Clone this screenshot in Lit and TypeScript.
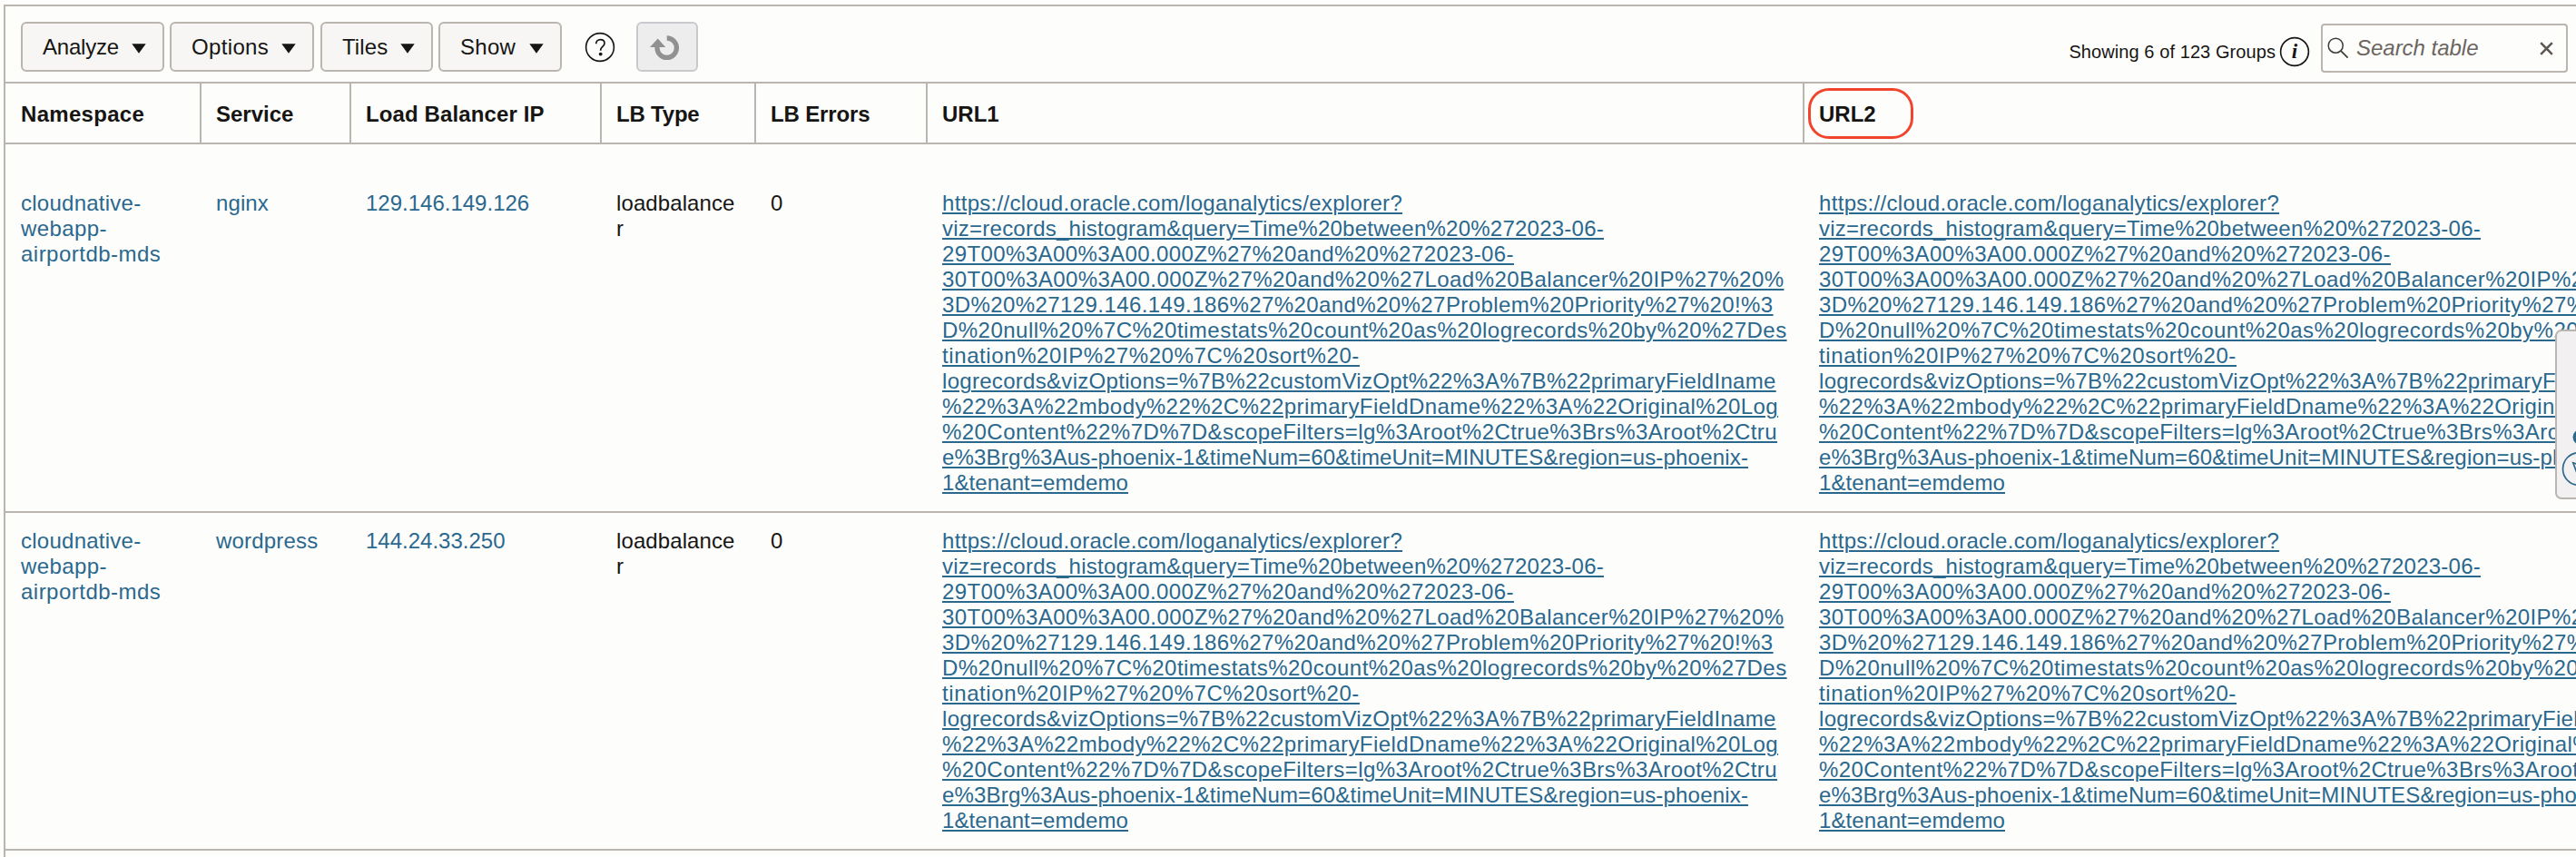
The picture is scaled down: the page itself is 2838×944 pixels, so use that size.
import { LitElement, html, css, svg } from 'lit';
import { customElement, property } from 'lit/decorators.js';
import { styleMap } from 'lit/directives/style-map.js';

type Line = [text: string, tracking: number];

interface Row {
  namespace: Line[];
  service: Line;
  ip: Line;
  type: Line[];
  errors: string;
}

const URL_LINES: Line[] = [
  ['https://cloud.oracle.com/loganalytics/explorer?', 0.315],
  ['viz=records_histogram&query=Time%20between%20%272023-06-', 0.241],
  ['29T00%3A00%3A00.000Z%27%20and%20%272023-06-', 0.407],
  ['30T00%3A00%3A00.000Z%27%20and%20%27Load%20Balancer%20IP%27%20%', 0.432],
  ['3D%20%27129.146.149.186%27%20and%20%27Problem%20Priority%27%20!%3', 0.415],
  ['D%20null%20%7C%20timestats%20count%20as%20logrecords%20by%20%27Des', 0.476],
  ['tination%20IP%27%20%7C%20sort%20-', 0.597],
  ['logrecords&vizOptions=%7B%22customVizOpt%22%3A%7B%22primaryFieldIname', 0.3],
  ['%22%3A%22mbody%22%2C%22primaryFieldDname%22%3A%22Original%20Log', 0.432],
  ['%20Content%22%7D%7D&scopeFilters=lg%3Aroot%2Ctrue%3Brs%3Aroot%2Ctru', 0.442],
  ['e%3Brg%3Aus-phoenix-1&timeNum=60&timeUnit=MINUTES&region=us-phoenix-', 0.181],
  ['1&tenant=emdemo', 0.1],
];

const NAMESPACE: Line[] = [['cloudnative-', 0.25], ['webapp-', 0.4], ['airportdb-mds', 0.48]];
const TYPE: Line[] = [['loadbalance', 0.1], ['r', 0]];

const ROWS: Row[] = [
  { namespace: NAMESPACE, service: ['nginx', 0.1], ip: ['129.146.149.126', 0], type: TYPE, errors: '0' },
  { namespace: NAMESPACE, service: ['wordpress', 0.2], ip: ['144.24.33.250', 0], type: TYPE, errors: '0' },
];

const HEADERS: Line[] = [
  ['Namespace', 0.3],
  ['Service', 0],
  ['Load Balancer IP', 0.12],
  ['LB Type', -0.2],
  ['LB Errors', -0.15],
  ['URL1', 0],
  ['URL2', 0],
];

const track = ([text, spacing]: Line) =>
  html`<span style=${styleMap({ letterSpacing: `${spacing}px` })}>${text}</span>`;

@customElement('menu-button')
class MenuButton extends LitElement {
  @property() label = '';
  @property({ type: Number }) width = 158;
  @property({ type: Number }) tracking = 0;

  static styles = css`
    :host { display: block; }
    .button {
      box-sizing: border-box;
      display: flex;
      align-items: center;
      justify-content: space-between;
      height: 55px;
      padding: 0 18px 0 22px;
      border: 2px solid #bbb5b0;
      border-radius: 6px;
      background: #f7f6f4;
      color: #161513;
      font: 24px/28px 'Liberation Sans', Arial, sans-serif;
      white-space: nowrap;
    }
    .arrow { display: block; margin-top: 3px; }
  `;

  render() {
    return html`<div class="button" style=${styleMap({ width: `${this.width}px` })}>
      ${track([this.label, this.tracking])}
      <svg class="arrow" width="16" height="11" viewBox="0 0 16 11"><path d="M.3 .2h15.4L8 10.8z" fill="#161513" /></svg>
    </div>`;
  }
}

@customElement('side-panel')
class SidePanel extends LitElement {
  static styles = css`
    :host { display: block; }
    .panel {
      box-sizing: border-box;
      width: 60px;
      height: 187px;
      border: 2px solid #bbb5b0;
      border-radius: 7px;
      background: #f2f0f0;
    }
    svg { display: block; }
  `;

  render() {
    return html`<div class="panel">
      <svg width="56" height="183" viewBox="2817 365 56 183">
        <circle cx="2842.5" cy="481.5" r="8" fill="#2a688e" />
        <circle cx="2841.5" cy="516.5" r="18" fill="none" stroke="#2a688e" stroke-width="1.7" />
        <path d="M2834.8 509.8L2849 514.5L2839 521z" fill="none" stroke="#2a688e" stroke-width="1.7" />
      </svg>
    </div>`;
  }
}

@customElement('app-root')
class AppRoot extends LitElement {
  static styles = css`
    :host {
      display: block;
      position: relative;
      box-sizing: border-box;
      width: 100%;
      height: 944px;
      overflow: hidden;
      padding: 5px 0 0 4px;
      background: #fdfdfc;
      color: #161513;
      font: 24px/28px 'Liberation Sans', Arial, sans-serif;
    }
    .frame {
      box-sizing: border-box;
      height: 939px;
      border-top: 2px solid #bbb5b0;
      border-left: 2px solid #bbb5b0;
      overflow: hidden;
    }
    .toolbar {
      box-sizing: border-box;
      display: flex;
      align-items: flex-start;
      justify-content: space-between;
      height: 85px;
      padding: 17px 9px 0 17px;
      border-bottom: 2px solid #bbb5b0;
    }
    .actions, .tools { display: flex; align-items: flex-start; }
    .actions { gap: 6px; }
    .tiles { margin-left: 1px; }
    .help { margin: 11px 17px 0 19px; }
    .refresh {
      box-sizing: border-box;
      width: 68px;
      height: 55px;
      border: 2px solid #c8c9cc;
      border-radius: 6px;
      background: #ededed;
    }
    svg { display: block; }
    .count { margin-top: 21px; font-size: 20px; line-height: 24px; white-space: nowrap; }
    .info { margin: 16px 12px 0 4px; }
    .search {
      box-sizing: border-box;
      display: flex;
      align-items: center;
      width: 272px;
      height: 54px;
      margin-top: 2px;
      padding: 0 14px 0 5px;
      border: 2px solid #bbb5b0;
      border-radius: 4px;
    }
    .placeholder { flex: 1; margin-left: 8px; color: #6b6560; font-style: italic; white-space: nowrap; letter-spacing: -0.02px; }
    .serif { font: italic bold 23px 'Liberation Serif', serif; }
    .columns {
      display: grid;
      grid-template-columns: 216px 165px 276px 170px 189px 966px 968px;
    }
    .head { height: 65px; border-bottom: 2px solid #bbb5b0; font-weight: bold; }
    .head .cell { display: flex; align-items: center; border-right: 2px solid #bbb5b0; padding-top: 2px; }
    .cell { box-sizing: border-box; padding: 0 16px; white-space: nowrap; }
    .cell:first-child { padding-left: 17px; }
    .row { border-bottom: 2px solid #bbb5b0; padding: 17px 0; }
    .row.first { padding-top: 51px; }
    .stack { display: flex; flex-direction: column; align-items: flex-start; }
    .link { color: #2a688e; }
    .url a {
      color: #2a688e;
      text-decoration: underline;
      text-decoration-thickness: 2px;
      text-underline-offset: 2px;
    }
    .mark {
      position: absolute;
      box-sizing: border-box;
      left: 1992px;
      top: 97px;
      width: 116px;
      height: 56px;
      border: 3px solid #f0452c;
      border-radius: 23px;
    }
    .side { position: absolute; left: 2815px; top: 363px; }
  `;

  private url() {
    return html`<div class="cell stack url">
      ${URL_LINES.map(([text, spacing]) => html`<a style=${styleMap({ letterSpacing: `${spacing}px` })}>${text}</a>`)}
    </div>`;
  }

  render() {
    return html`
      <div class="frame">
        <div class="toolbar">
          <div class="actions">
            <menu-button label="Analyze" width="158" tracking="-0.2"></menu-button>
            <menu-button label="Options" width="159" tracking="0.35"></menu-button>
            <menu-button class="tiles" label="Tiles" width="124" tracking="0.1"></menu-button>
            <menu-button label="Show" width="136" tracking="0.3"></menu-button>
            <svg class="help" width="34" height="34" viewBox="0 0 34 34">
              <circle cx="17" cy="17" r="15.4" fill="none" stroke="#161513" stroke-width="1.6" />
              <path d="M12.7 13.2c0-2.7 2-4.6 4.7-4.6 2.7 0 4.6 1.7 4.6 4.1 0 3.3-4.3 4-4.3 7.2v.8" fill="none" stroke="#161513" stroke-width="1.7" />
              <circle cx="17.7" cy="24.6" r="1.9" fill="#161513" />
            </svg>
            <div class="refresh">
              <svg width="64" height="51" viewBox="2 2 64 51">
                <path d="M33.7 18A10.7 10.7 0 1 1 23 28.7V27" fill="none" stroke="#919191" stroke-width="5.3" />
                <path d="M15 28L23.7 18.4L32.3 28z" fill="#919191" />
              </svg>
            </div>
          </div>
          <div class="tools">
            <span class="count">${track(['Showing 6 of 123 Groups', 0.08])}</span>
            <svg class="info" width="34" height="34" viewBox="0 0 34 34">
              <circle cx="17" cy="17" r="15.4" fill="none" stroke="#161513" stroke-width="1.6" />
              ${svg`<text class="serif" x="17" y="24.2" text-anchor="middle" fill="#161513">i</text>`}
            </svg>
            <div class="search">
              <svg width="24" height="24" viewBox="0 0 24 24">
                <circle cx="9.2" cy="9.2" r="8" fill="none" stroke="#403c38" stroke-width="1.5" />
                <path d="M14.8 14.8L22.6 22.6" stroke="#403c38" stroke-width="1.7" />
              </svg>
              <span class="placeholder">Search table</span>
              <svg width="15" height="15" viewBox="0 0 15 15">
                <path d="M1.2 1.2L13.8 13.8M13.8 1.2L1.2 13.8" stroke="#5d5752" stroke-width="2.5" />
              </svg>
            </div>
          </div>
        </div>
        <div class="columns head">
          ${HEADERS.map((h) => html`<div class="cell">${track(h)}</div>`)}
        </div>
        ${ROWS.map(
          (r, i) => html`<div class="columns row ${i === 0 ? 'first' : ''}">
            <div class="cell stack link">${r.namespace.map(track)}</div>
            <div class="cell link">${track(r.service)}</div>
            <div class="cell link">${track(r.ip)}</div>
            <div class="cell stack">${r.type.map(track)}</div>
            <div class="cell">${r.errors}</div>
            ${this.url()}${this.url()}
          </div>`,
        )}
      </div>
      <div class="mark"></div>
      <side-panel class="side"></side-panel>
    `;
  }
}
